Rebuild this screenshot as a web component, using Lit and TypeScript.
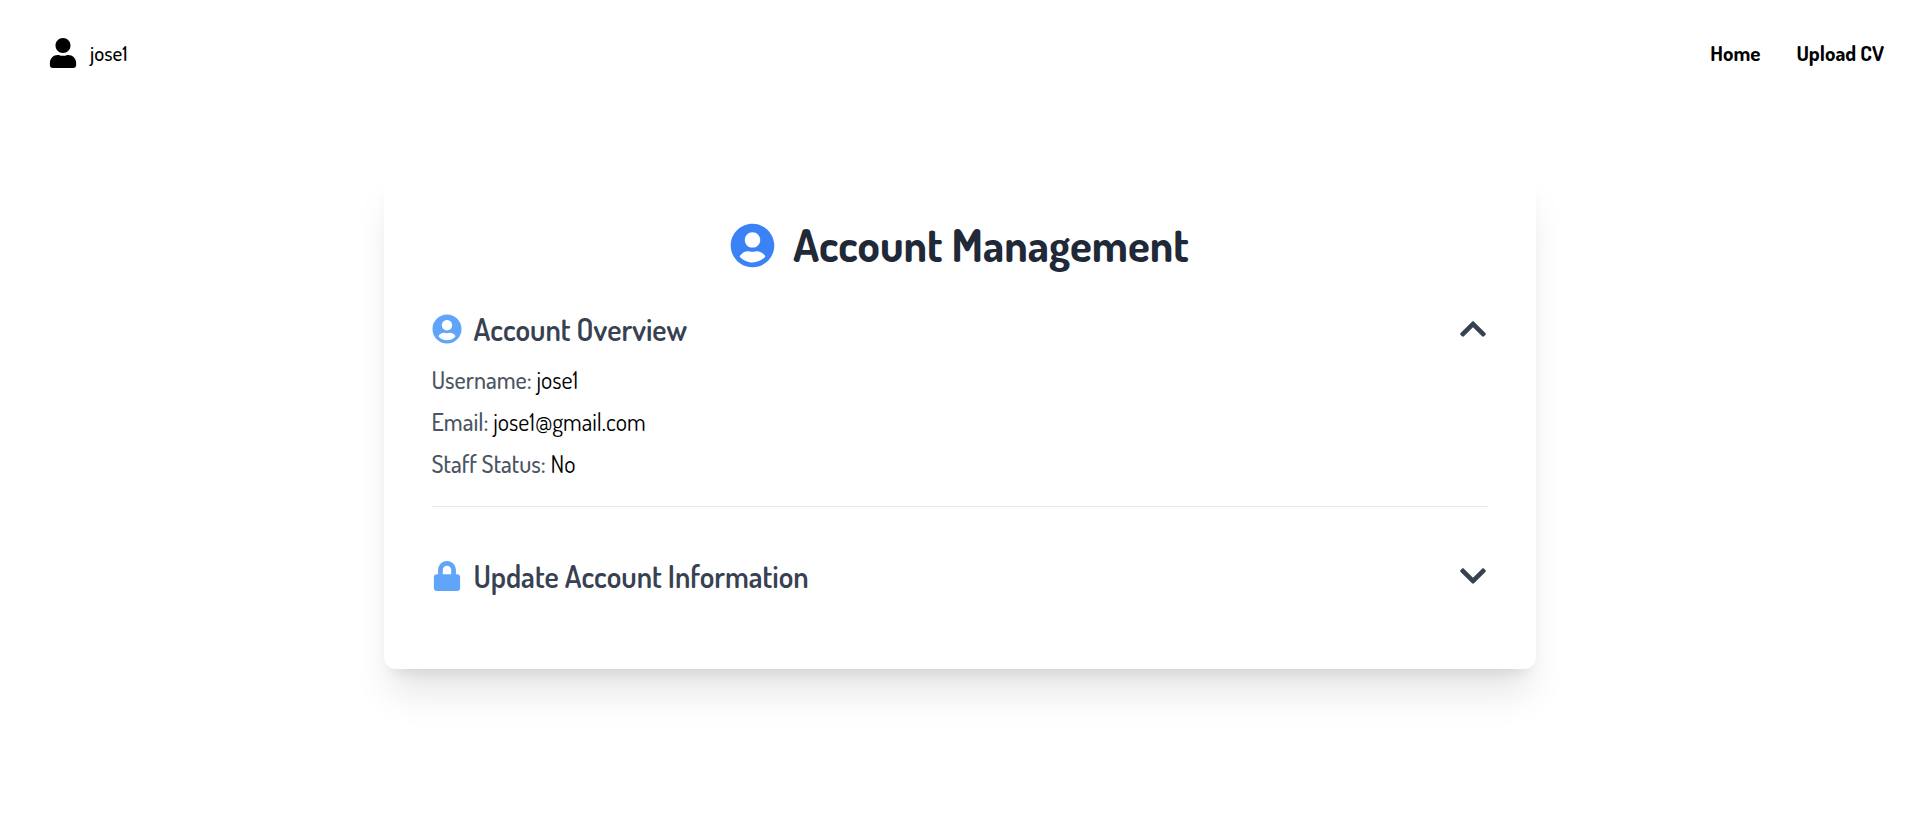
import { LitElement, html, css, svg, nothing } from "lit";
import { customElement, state } from "lit/decorators.js";

const ICONS = {
  user: {
    box: "0 0 448 512",
    d: "M224 256c70.7 0 128-57.3 128-128S294.7 0 224 0 96 57.3 96 128s57.3 128 128 128zm89.6 32h-16.7c-22.2 10.2-46.9 16-72.9 16s-50.6-5.8-72.9-16h-16.7C60.2 288 0 348.2 0 422.4V464c0 26.5 21.5 48 48 48h352c26.5 0 48-21.5 48-48v-41.6c0-74.2-60.2-134.4-134.4-134.4z",
  },
  userCircle: {
    box: "0 0 496 512",
    d: "M248 8C111 8 0 119 0 256s111 248 248 248 248-111 248-248S385 8 248 8zm0 96c48.6 0 88 39.4 88 88s-39.4 88-88 88-88-39.4-88-88 39.4-88 88-88zm0 344c-58.7 0-111.3-26.6-146.5-68.2 18.8-35.4 55.6-59.8 98.5-59.8 2.4 0 4.8.4 7.1 1.1 13 4.2 26.6 6.9 40.9 6.9 14.3 0 28-2.7 40.9-6.9 2.3-.7 4.7-1.1 7.1-1.1 42.9 0 79.7 24.4 98.5 59.8C359.3 421.4 306.7 448 248 448z",
  },
  lock: {
    box: "0 0 448 512",
    d: "M400 224h-24v-72C376 68.2 307.8 0 224 0S72 68.2 72 152v72H48c-26.5 0-48 21.5-48 48v192c0 26.5 21.5 48 48 48h352c26.5 0 48-21.5 48-48V272c0-26.5-21.5-48-48-48zm-104 0H152v-72c0-39.7 32.3-72 72-72s72 32.3 72 72v72z",
  },
  chevronUp: {
    box: "0 0 448 512",
    d: "M240.971 130.524l194.343 194.343c9.373 9.373 9.373 24.569 0 33.941l-22.667 22.667c-9.357 9.357-24.522 9.375-33.901.04L224 227.495 69.255 381.516c-9.379 9.335-24.544 9.317-33.901-.04l-22.667-22.667c-9.373-9.373-9.373-24.569 0-33.941L207.03 130.525c9.372-9.373 24.568-9.373 33.941-.001z",
  },
  chevronDown: {
    box: "0 0 448 512",
    d: "M207.029 381.476L12.686 187.132c-9.373-9.373-9.373-24.569 0-33.941l22.667-22.667c9.357-9.357 24.522-9.375 33.901-.04L224 284.505l154.745-154.021c9.379-9.335 24.544-9.317 33.901.04l22.667 22.667c9.373 9.373 9.373 24.569 0 33.941L240.971 381.476c-9.373 9.372-24.569 9.372-33.942 0z",
  },
};

type IconName = keyof typeof ICONS;

const icon = (name: IconName, cls: string) => html`
  <svg class="icon ${cls}" viewBox=${ICONS[name].box} fill="currentColor" aria-hidden="true">
    ${svg`<path d=${ICONS[name].d}></path>`}
  </svg>
`;

@customElement("app-root")
export class AppRoot extends LitElement {
  @state() private overviewOpen = true;
  @state() private updateOpen = false;

  private account = { username: "jose1", email: "jose1@gmail.com", staff: false };

  static styles = css`
    :host {
      display: block;
      min-height: 100vh;
      background: #fff;
      color: #000;
      font-family: Dosis, "Roboto Condensed", sans-serif;
      font-size: 24px;
      line-height: 36px;
    }
    * {
      box-sizing: border-box;
    }
    h1,
    h2,
    dl,
    dd {
      margin: 0;
    }
    .icon {
      display: block;
      flex: none;
      width: 30px;
      height: 30px;
    }
    header {
      display: flex;
      align-items: center;
      justify-content: space-between;
      padding: 38px 35px 38px 48px;
      font-size: 21px;
      line-height: 30px;
    }
    header a {
      color: inherit;
      text-decoration: none;
    }
    .profile {
      display: flex;
      align-items: center;
      gap: 12px;
      font-weight: 500;
    }
    nav {
      display: flex;
      gap: 36px;
      font-weight: 700;
    }
    main {
      max-width: 1152px;
      margin: 64px auto;
      padding: 48px;
      border-radius: 12px;
      background: #fff;
      box-shadow:
        0 30px 38px -7px rgb(0 0 0 / 0.1),
        0 12px 15px -9px rgb(0 0 0 / 0.1);
    }
    h1 {
      display: flex;
      align-items: center;
      justify-content: center;
      gap: 18px;
      margin-bottom: 36px;
      color: #1f2937;
      font-size: 45px;
      font-weight: 700;
      line-height: 54px;
    }
    .title-icon {
      width: 45px;
      height: 45px;
      color: #3b82f6;
    }
    section {
      padding-bottom: 24px;
    }
    section + section {
      margin-top: 48px;
    }
    .divided {
      border-bottom: 1px solid #e5e7eb;
    }
    .toggle {
      display: flex;
      align-items: center;
      justify-content: space-between;
      width: 100%;
      padding: 0;
      border: 0;
      background: none;
      color: #374151;
      font: inherit;
      font-size: 30px;
      font-weight: 600;
      line-height: 42px;
      text-align: left;
      cursor: pointer;
    }
    .label {
      display: flex;
      align-items: center;
      gap: 12px;
    }
    .label-icon {
      color: #60a5fa;
    }
    .details {
      display: grid;
      gap: 6px;
      margin-top: 12px;
    }
    dt,
    dd {
      display: inline;
    }
    dt {
      color: #4b5563;
      font-weight: 500;
    }
    form {
      display: grid;
      gap: 12px;
      margin-top: 12px;
    }
    form label {
      display: grid;
      color: #4b5563;
    }
    input {
      padding: 6px 12px;
      border: 1px solid #e5e7eb;
      border-radius: 6px;
      font: inherit;
    }
  `;

  private heading(name: IconName, text: string, open: boolean, toggle: () => void) {
    return html`
      <h2>
        <button class="toggle" type="button" aria-expanded=${open} @click=${toggle}>
          <span class="label">${icon(name, "label-icon")}<span>${text}</span></span>
          ${icon(open ? "chevronUp" : "chevronDown", "")}
        </button>
      </h2>
    `;
  }

  private row(term: string, value: string) {
    return html`<div><dt>${term}:</dt> <dd>${value}</dd></div>`;
  }

  render() {
    const { username, email, staff } = this.account;
    return html`
      <header>
        <a class="profile" href="#account">${icon("user", "")}<span>${username}</span></a>
        <nav>
          <a href="#home">Home</a>
          <a href="#upload">Upload CV</a>
        </nav>
      </header>
      <main>
        <h1>${icon("userCircle", "title-icon")}<span>Account Management</span></h1>
        <section class="divided">
          ${this.heading("userCircle", "Account Overview", this.overviewOpen, () => {
            this.overviewOpen = !this.overviewOpen;
          })}
          ${this.overviewOpen
            ? html`<dl class="details">
                ${this.row("Username", username)} ${this.row("Email", email)}
                ${this.row("Staff Status", staff ? "Yes" : "No")}
              </dl>`
            : nothing}
        </section>
        <section>
          ${this.heading("lock", "Update Account Information", this.updateOpen, () => {
            this.updateOpen = !this.updateOpen;
          })}
          ${this.updateOpen
            ? html`<form>
                <label>Username<input name="username" .value=${username} /></label>
                <label>Email<input name="email" type="email" .value=${email} /></label>
              </form>`
            : nothing}
        </section>
      </main>
    `;
  }
}
